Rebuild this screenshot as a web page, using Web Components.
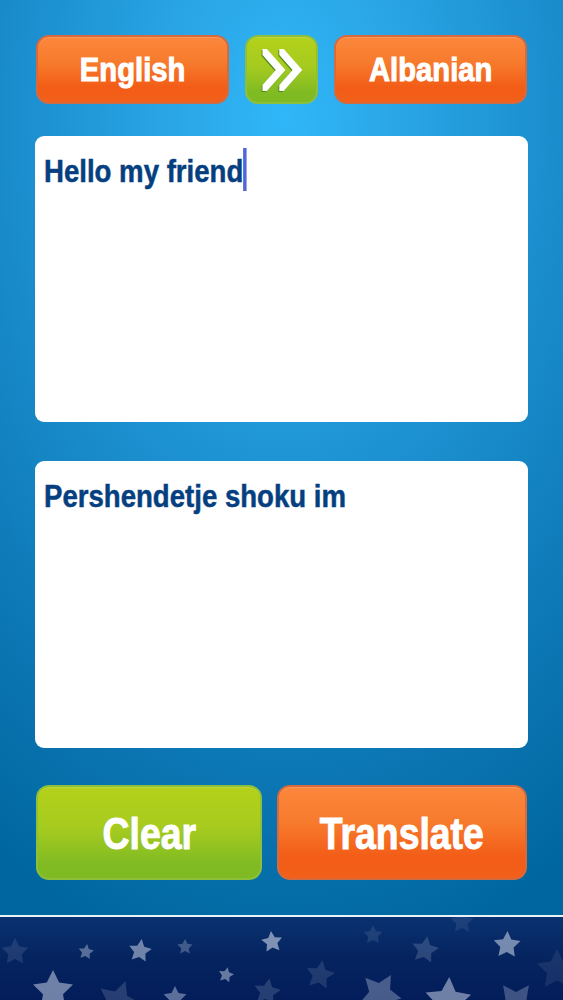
<!DOCTYPE html>
<html>
<head>
<meta charset="utf-8">
<title>Translator</title>
<style>
  html, body { margin: 0; padding: 0; }
  body { background: #0068a0; font-family: "Liberation Sans", Arial, sans-serif; }
</style>
</head>
<body>
<translator-app></translator-app>

<script>
class GlossyButton extends HTMLElement {
  connectedCallback() {
    this.attachShadow({ mode: 'open' });
    this.shadowRoot.innerHTML = `
      <style>
        :host {
          display: flex;
          align-items: center;
          justify-content: center;
          box-sizing: border-box;
          height: var(--btn-height, 69px);
          border-radius: 13px;
          color: white;
          font-weight: 700;
          font-size: var(--btn-font, 33px);
          background: linear-gradient(#fb873d 0%, #f77a2c 40%, #f25c16 78%, #f2601a 100%);
          border: 2px solid #d56a3e;
          box-shadow: inset 0 1px 0 rgba(255,255,255,.15);
          -webkit-text-stroke: 1px white;
          padding-top: var(--btn-nudge, 0);
        }
        :host([color="green"]) {
          background: linear-gradient(#b4d11a 0%, #a6cb1f 45%, #80bb23 85%, #7fba24 100%);
          border-color: #8cc03a;
        }
        span { display: block; transform: scaleX(var(--btn-scale, .885)); }
      </style>
      <span><slot></slot></span>
    `;
  }
}

class TextPanel extends HTMLElement {
  connectedCallback() {
    this.attachShadow({ mode: 'open' });
    this.shadowRoot.innerHTML = `
      <style>
        :host {
          display: block;
          box-sizing: border-box;
          height: 287px;
          background: white;
          border-radius: 9px;
          padding: 17px 9px;
          color: #053f80;
          font-weight: 700;
          font-size: 32px;
          line-height: 37px;
          -webkit-text-stroke: .5px #053f80;
        }
        .line {
          display: inline-block;
          position: relative;
          white-space: nowrap;
          transform: scaleX(.862);
          transform-origin: 0 0;
        }
        .caret {
          display: none;
          position: absolute;
          left: 100%;
          top: -5px;
          width: 3.5px;
          height: 43px;
          background: #5166d8;
          -webkit-text-stroke: 0;
        }
        :host([caret]) .caret { display: block; }
      </style>
      <span class="line"><slot></slot><span class="caret"></span></span>
    `;
  }
}

// Stars are placed freely on the banner: x, y, radius, rotation, opacity
const STARS = [
  [15, 952, 14, 0, .13], [86, 952, 8, 8, .42], [140, 951, 12, 8, .55], [185, 947, 8, 0, .3],
  [226, 975, 8, 12, .5], [53, 991, 21, 0, .55], [175, 998, 12, 0, .45], [118, 1002, 22, 20, .18],
  [267, 992, 14, 10, .18], [272, 942, 11, -6, .62], [373, 935, 10, 0, .12], [425, 950, 14, 10, .2],
  [462, 922, 12, 0, .1], [507, 945, 14, 2, .58], [320, 975, 15, 10, .14], [380, 994, 22, 30, .35],
  [448, 1001, 24, 3, .55], [516, 1003, 22, 36, .3], [557, 970, 21, 0, .1]
];

class StarBanner extends HTMLElement {
  connectedCallback() {
    this.attachShadow({ mode: 'open' });
    const stars = STARS.map(([x, y, r, rot, op]) => {
      const pts = [];
      for (let i = 0; i < 10; i++) {
        const rad = i % 2 ? r * 0.5 : r;
        const a = (i * 36 + rot - 90) * Math.PI / 180;
        pts.push((x + rad * Math.cos(a)).toFixed(1) + ',' + (y + rad * Math.sin(a)).toFixed(1));
      }
      return `<polygon points="${pts.join(' ')}" fill="#c8d2e6" fill-opacity="${op}"/>`;
    }).join('');
    this.shadowRoot.innerHTML = `
      <style>
        :host {
          display: block;
          height: 85px;
          box-sizing: border-box;
          border-top: 2px solid #e6f2f8;
          background: linear-gradient(#0a3270 0%, #05245f 50%, #031d5a 100%);
          overflow: hidden;
        }
        svg { display: block; width: 563px; height: 83px; }
      </style>
      <svg viewBox="0 917 563 83" aria-hidden="true">${stars}</svg>
    `;
  }
}

class TranslatorApp extends HTMLElement {
  connectedCallback() {
    this.attachShadow({ mode: 'open' });
    this.shadowRoot.innerHTML = `
      <style>
        :host {
          display: flex;
          flex-direction: column;
          height: 1000px;
          width: 563px;
          overflow: hidden;
          background: radial-gradient(ellipse 560px 860px at 285px 115px, #30b7f9 0%, #2aa6e6 20%, #1c90d0 45%, #0d78b6 75%, #00669f 100%);
        }
        main {
          flex: 1;
          display: flex;
          flex-direction: column;
          padding: 35px 35px 0 35px;
        }
        .top {
          display: grid;
          grid-template-columns: 193px 73px 193px;
          justify-content: space-between;
          padding: 0 1px;
          --btn-height: 69px;
          --btn-font: 33px;
          --btn-scale: .885;
        }
        .panels {
          display: flex;
          flex-direction: column;
          gap: 39px;
          margin-top: 32px;
        }
        .panels text-panel:first-child { height: 286px; }
        .bottom {
          display: grid;
          grid-template-columns: 226px 250px;
          justify-content: space-between;
          padding: 0 1px;
          margin-top: 37px;
          --btn-height: 95px;
          --btn-font: 45px;
          --btn-scale: .83;
          --btn-nudge: 2px;
        }
        svg { display: block; margin-left: 3px; }
      </style>
      <main>
        <div class="top">
          <glossy-button>English</glossy-button>
          <glossy-button color="green">
            <svg width="50" height="46" viewBox="258 47 50 46">
              <g fill="#4f8a1c" transform="translate(-1,1)">
                <polygon points="260,55 260,49 265,49 286,70 265,91 260,91 260,85 275,70"/>
                <polygon points="279,55 279,49 284,49 305,70 284,91 279,91 279,85 294,70"/>
              </g>
              <g fill="#fff">
                <polygon points="260,55 260,49 265,49 286,70 265,91 260,91 260,85 275,70"/>
                <polygon points="279,55 279,49 284,49 305,70 284,91 279,91 279,85 294,70"/>
              </g>
            </svg>
          </glossy-button>
          <glossy-button>Albanian</glossy-button>
        </div>
        <div class="panels">
          <text-panel caret>Hello my friend</text-panel>
          <text-panel>Pershendetje shoku im</text-panel>
        </div>
        <div class="bottom">
          <glossy-button color="green">Clear</glossy-button>
          <glossy-button>Translate</glossy-button>
        </div>
      </main>
      <star-banner></star-banner>
    `;
  }
}

customElements.define('glossy-button', GlossyButton);
customElements.define('text-panel', TextPanel);
customElements.define('star-banner', StarBanner);
customElements.define('translator-app', TranslatorApp);
</script>
</body>
</html>
